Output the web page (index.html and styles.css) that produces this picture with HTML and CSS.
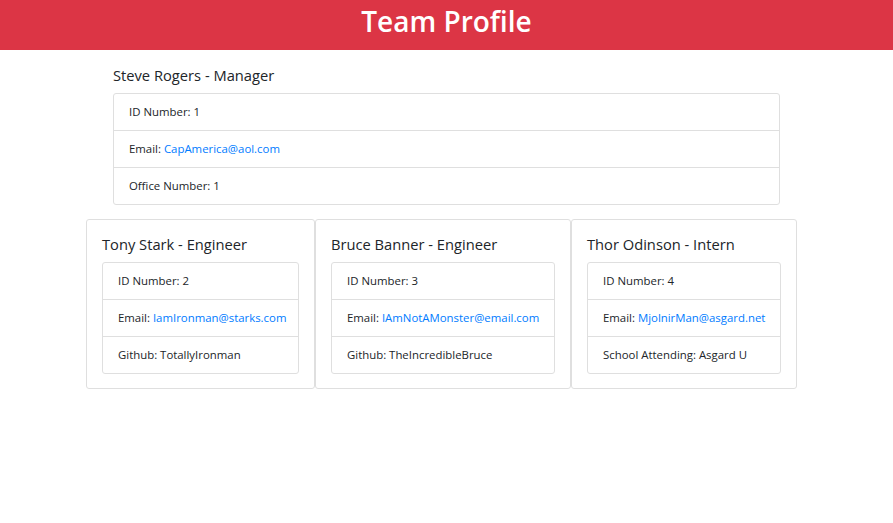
FILE: index.html
```html
<!DOCTYPE html>
<html lang="en">
<head>
<meta charset="utf-8">
<title>Team Profile</title>
<link rel="stylesheet" href="styles.css">
</head>
<body>
<header class="banner">
  <h1 class="banner-title">Team Profile</h1>
</header>
<main class="container">
  <section class="manager">
    <h5 class="card-title">Steve Rogers - Manager</h5>
    <ul class="list-group">
      <li class="list-item">ID Number: 1</li>
      <li class="list-item">Email: <a href="#" class="link">CapAmerica@aol.com</a></li>
      <li class="list-item">Office Number: 1</li>
    </ul>
  </section>
  <section class="team-row">
    <div class="card card-tony">
      <h5 class="card-title">Tony Stark - Engineer</h5>
      <ul class="list-group">
        <li class="list-item">ID Number: 2</li>
        <li class="list-item">Email: <a href="#" class="link">IamIronman@starks.com</a></li>
        <li class="list-item">Github: TotallyIronman</li>
      </ul>
    </div>
    <div class="card card-bruce">
      <h5 class="card-title">Bruce Banner - Engineer</h5>
      <ul class="list-group">
        <li class="list-item">ID Number: 3</li>
        <li class="list-item">Email: <a href="#" class="link">IAmNotAMonster@email.com</a></li>
        <li class="list-item">Github: TheIncredibleBruce</li>
      </ul>
    </div>
    <div class="card card-thor">
      <h5 class="card-title">Thor Odinson - Intern</h5>
      <ul class="list-group">
        <li class="list-item">ID Number: 4</li>
        <li class="list-item">Email: <a href="#" class="link">MjolnirMan@asgard.net</a></li>
        <li class="list-item">School Attending: Asgard U</li>
      </ul>
    </div>
  </section>
</main>
</body>
</html>
```

FILE: styles.css
```css
* { box-sizing: border-box; }

body {
  margin: 0;
  font-family: "Open Sans", "Noto Sans", sans-serif;
  font-size: 11.4px;
  line-height: 18px;
  color: #212529;
  background: #fff;
}

.banner {
  background: #dc3545;
  height: 50px;
  padding-top: 3px;
  text-align: center;
}

.banner-title {
  margin: 0;
  color: #fff;
  font-size: 28px;
  line-height: 36px;
  font-weight: 600;
}

.container {
  width: 697px;
  margin: 0 auto;
}

.manager {
  padding: 16px 15px 14px;
}

.card-title {
  margin: 0 0 9px;
  font-size: 14.7px;
  line-height: 18px;
  font-weight: 500;
  white-space: nowrap;
}

.list-group {
  list-style: none;
  margin: 0;
  padding: 0;
  border: 1px solid #dfdfdf;
  border-radius: 3px;
}

.list-item {
  padding: 9px 15px;
  border-top: 1px solid #dfdfdf;
  height: 37px;
  white-space: nowrap;
}

.list-item:first-child {
  border-top: 0;
  height: 36px;
}

.link {
  color: #007bff;
  text-decoration: none;
}

.team-row {
  display: flex;
  margin-left: -12px;
}

.card {
  border: 1px solid #dfdfdf;
  border-radius: 3px;
  padding: 15px 15px 14px;
  flex: none;
}

.card-tony { width: 229px; }
.card-bruce { width: 256px; }
.card-thor { width: 226px; }
```
